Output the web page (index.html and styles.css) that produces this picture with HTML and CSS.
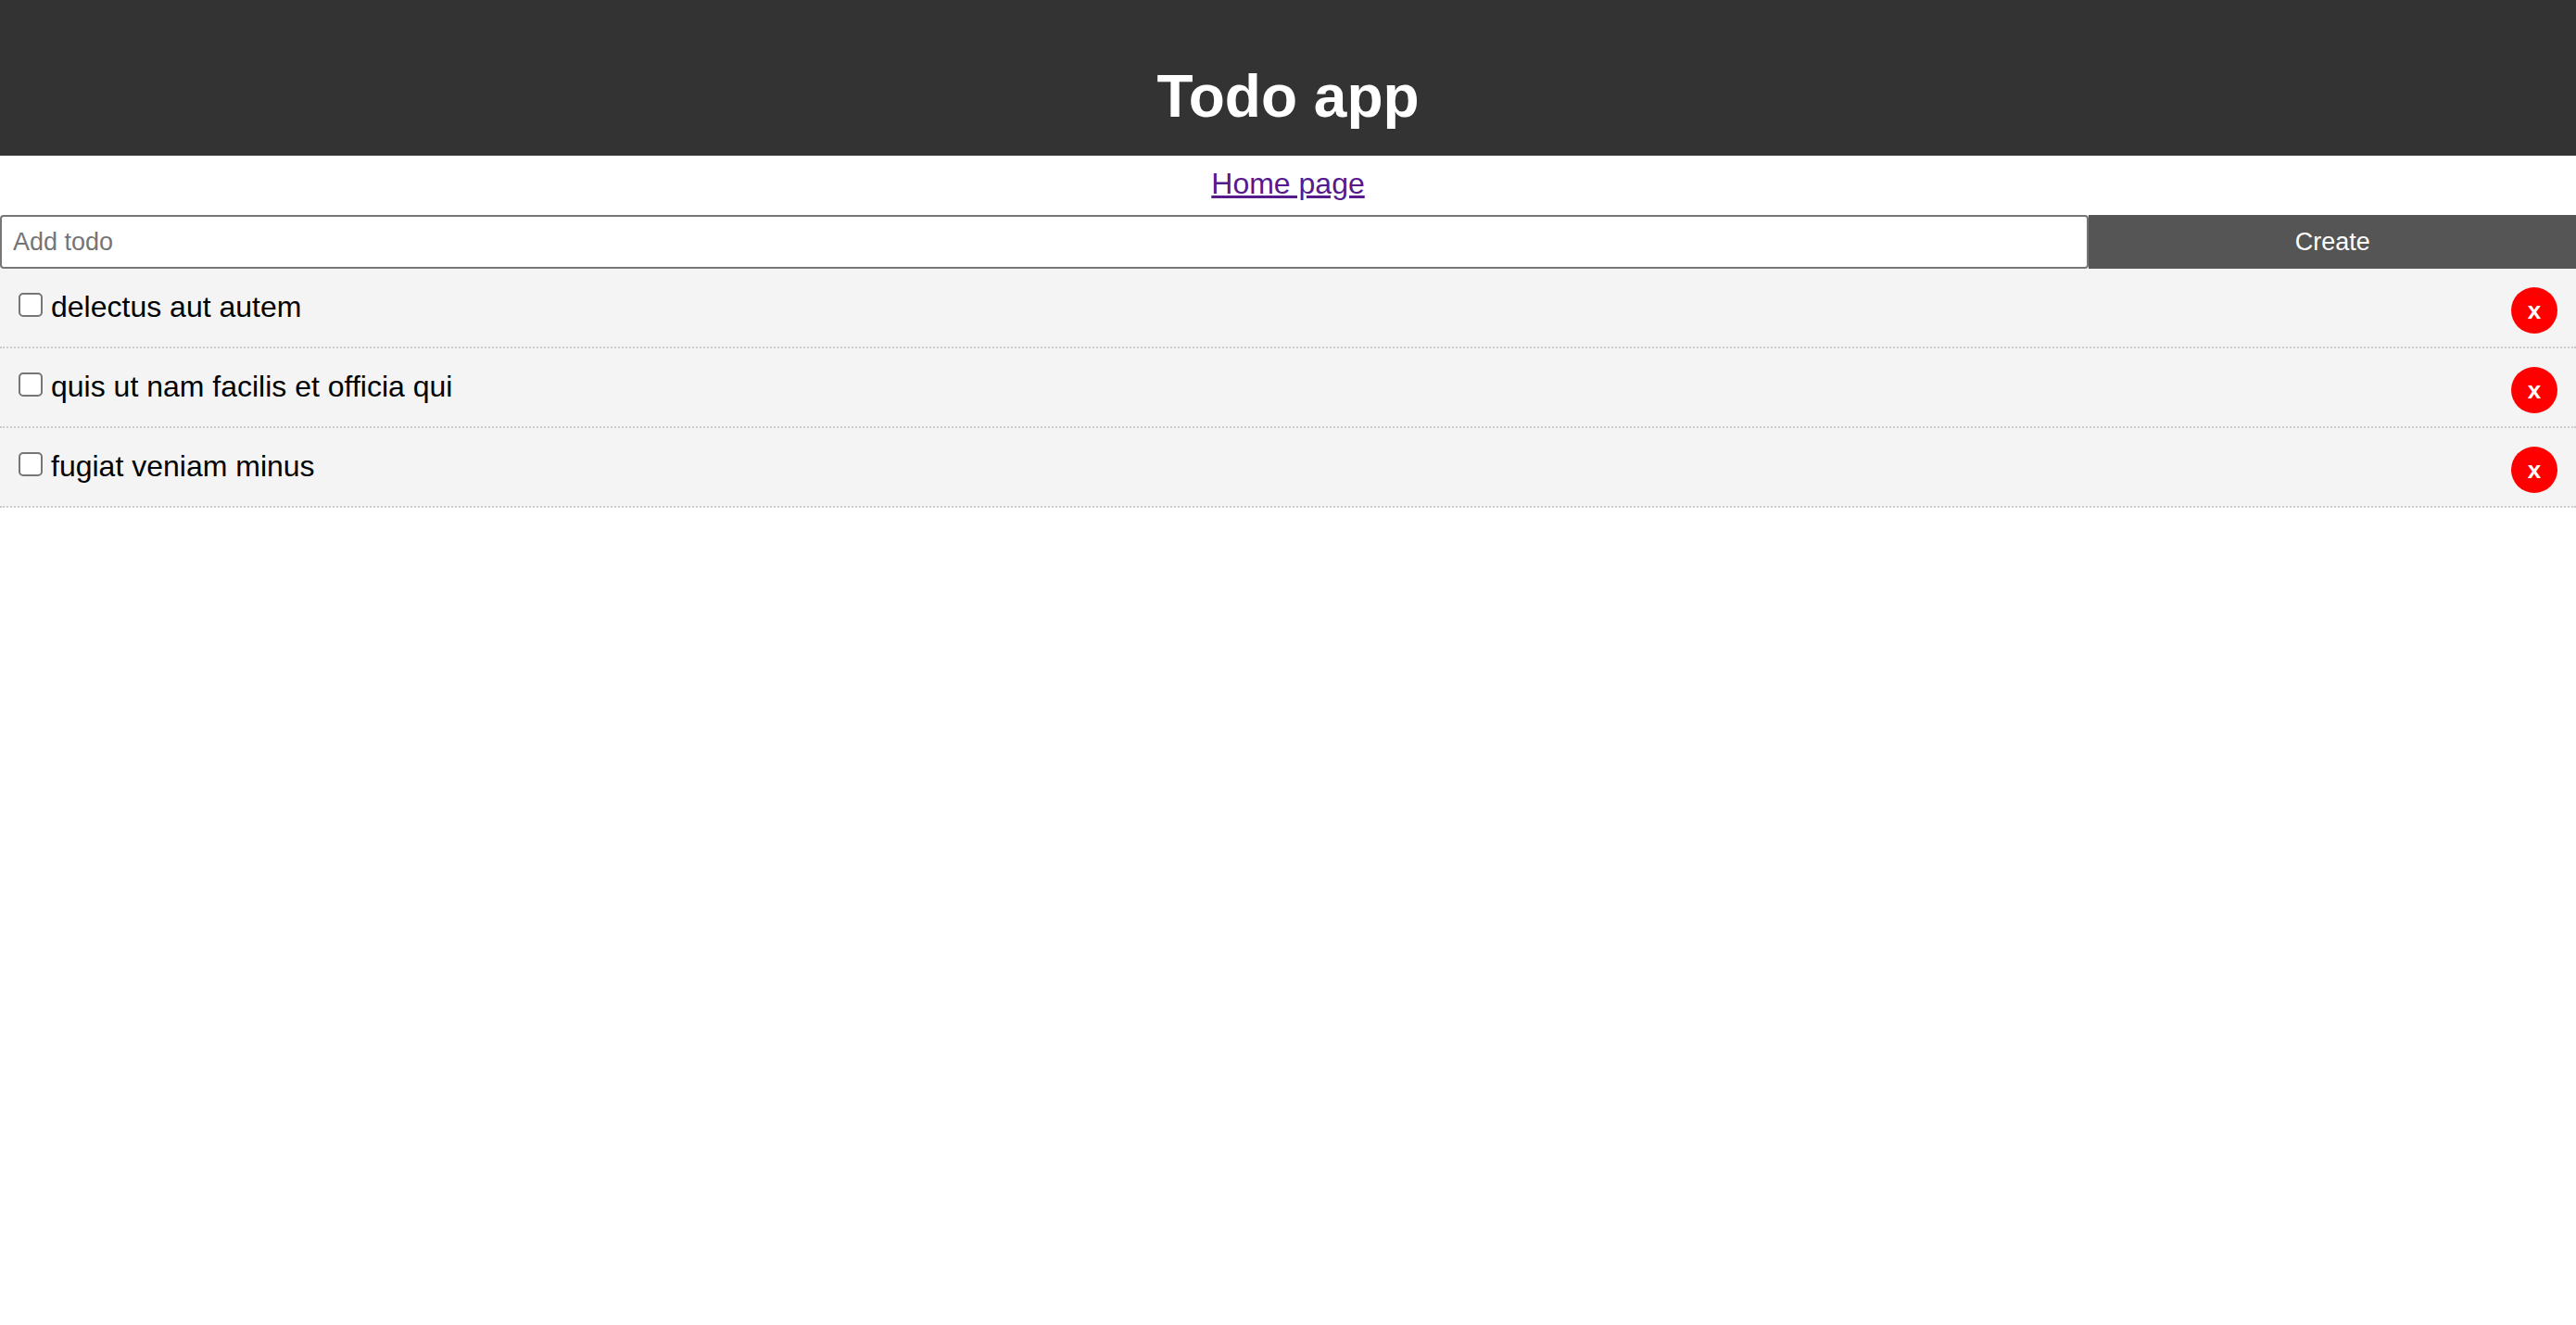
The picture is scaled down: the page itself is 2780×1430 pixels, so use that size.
FILE: index.html
```html
<!DOCTYPE html>
<html lang="en">
<head>
  <meta charset="utf-8">
  <meta name="viewport" content="width=device-width, initial-scale=1">
  <title>Todo app</title>
  <link rel="stylesheet" href="styles.css">
</head>
<body>
  <header class="header">
    <h1 class="header-title">Todo app</h1>
  </header>
  <nav class="nav"><a class="nav-link" href="#">Home page</a></nav>
  <main>
    <form class="add-form">
      <input class="add-input" type="text" placeholder="Add todo" aria-label="Add todo">
      <button class="add-button" type="submit">Create</button>
    </form>
    <ul class="todo-list">
      <li class="todo">
        <input class="todo-check" type="checkbox" id="todo-1">
        <label class="todo-label" for="todo-1">delectus aut autem</label>
        <button class="todo-delete" type="button">x</button>
      </li>
      <li class="todo">
        <input class="todo-check" type="checkbox" id="todo-2">
        <label class="todo-label" for="todo-2">quis ut nam facilis et officia qui</label>
        <button class="todo-delete" type="button">x</button>
      </li>
      <li class="todo">
        <input class="todo-check" type="checkbox" id="todo-3">
        <label class="todo-label" for="todo-3">fugiat veniam minus</label>
        <button class="todo-delete" type="button">x</button>
      </li>
    </ul>
  </main>
</body>
</html>
```
FILE: styles.css
```css
* {
  box-sizing: border-box;
  margin: 0;
  padding: 0;
}

body {
  background: #fff;
  color: #000;
  font-family: "Liberation Sans", Arial, Helvetica, sans-serif;
  font-size: 32px;
  line-height: 44px;
}

.header {
  padding: 60px 20px 20px;
  background: #333;
  color: #fff;
  text-align: center;
}

.header-title {
  font-size: 64px;
  line-height: 88px;
}

.nav {
  padding: 8px 0 12px;
  text-align: center;
}

.nav-link {
  color: #551a8b;
}

.add-form {
  display: flex;
}

.add-input {
  flex: 10 1 0;
  min-width: 0;
  height: 58px;
  padding: 0 10px 0 12px;
  border: 2px solid #767676;
  border-radius: 4px;
  background: #fff;
  font-family: inherit;
  font-size: 27px;
}

.add-input::placeholder {
  color: #757575;
}

.add-button {
  flex: 2 1 0;
  padding: 0 40px;
  border: 0;
  background: #555;
  color: #fff;
  font-family: inherit;
  font-size: 27px;
  cursor: pointer;
}

.todo-list {
  list-style: none;
}

.todo {
  display: flex;
  align-items: flex-start;
  min-height: 86px;
  padding: 20px 20px 14px;
  border-bottom: 2px dotted #ccc;
  background: #f4f4f4;
}

.todo-check {
  appearance: none;
  width: 26px;
  height: 26px;
  margin: 6px 9px 0 0;
  border: 2px solid #767676;
  border-radius: 5px;
  background: #fff;
}

.todo-check:checked {
  background: #0075ff;
  border-color: #0075ff;
}

.todo-label {
  flex: 1;
  line-height: 42px;
}

.todo-delete {
  width: 50px;
  height: 50px;
  border: 0;
  border-radius: 50%;
  background: #f00;
  color: #fff;
  font-family: inherit;
  font-size: 26px;
  font-weight: bold;
  cursor: pointer;
}
```
